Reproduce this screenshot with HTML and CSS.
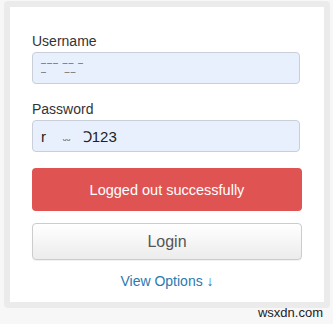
FILE: index.html
```html
<!DOCTYPE html>
<html>
<head>
<meta charset="utf-8">
<link rel="stylesheet" href="styles.css">
</head>
<body>
<div class="page">
  <div class="panel">
    <form class="form">
      <label class="label" for="user">Username</label>
      <div class="field user-field" id="user"><span class="blur">–––&nbsp;––&nbsp;–<br>–&nbsp;&nbsp;&nbsp;&nbsp;&nbsp;––</span></div>
      <label class="label pw-label" for="pw">Password</label>
      <div class="field pw-field" id="pw">r&nbsp;&nbsp;&nbsp;&nbsp;<span class="dots">ᵕᵕ</span>&nbsp;&nbsp;&nbsp;Ↄ123</div>
      <div class="alert">Logged out successfully</div>
      <button type="button" class="btn">Login</button>
      <a class="link" href="#">View Options ↓</a>
    </form>
  </div>
  <div class="watermark">wsxdn.com</div>
</div>
</body>
</html>
```
FILE: styles.css
```css
html, body {
  margin: 0;
  padding: 0;
  background: #f7f7f7;
}
.page {
  position: relative;
  width: 333px;
  height: 324px;
  padding: 1px 0 0 4px;
  box-sizing: border-box;
  font-family: "Liberation Sans", Arial, sans-serif;
}
.panel {
  width: 326px;
  height: 307px;
  box-sizing: border-box;
  border: 6px solid #ebebeb;
  border-radius: 4px;
  background: #fff;
}
.form {
  display: flex;
  flex-direction: column;
  align-items: flex-start;
  padding: 24px 16px 0 22px;
}
.label {
  font-size: 14px;
  line-height: 20px;
  color: #333;
  margin-bottom: 1px;
}
.pw-label {
  margin-top: 15px;
}
.field {
  width: 268px;
  height: 32px;
  box-sizing: border-box;
  background: #e8f0fe;
  border: 1px solid #c9cfd8;
  border-radius: 4px;
  padding: 0 8px;
  display: flex;
  align-items: center;
  color: #222;
}
.user-field .blur {
  font-size: 9px;
  line-height: 9px;
  letter-spacing: 1px;
  color: #555;
}
.pw-field {
  font-size: 15px;
}
.pw-field .dots {
  font-size: 10px;
  color: #444;
  padding-top: 6px;
}
.alert {
  margin-top: 16px;
  width: 270px;
  height: 43px;
  box-sizing: border-box;
  background: #df5353;
  border-radius: 4px;
  color: #fff;
  font-size: 14.5px;
  display: flex;
  align-items: center;
  justify-content: center;
}
.btn {
  margin-top: 12px;
  width: 270px;
  height: 37px;
  box-sizing: border-box;
  border: 1px solid #ccc;
  border-radius: 4px;
  background: linear-gradient(#ffffff, #ececec);
  box-shadow: 0 1px 1px rgba(0,0,0,0.06);
  font-family: "Liberation Sans", Arial, sans-serif;
  font-size: 16px;
  color: #555;
  padding: 0;
}
.link {
  align-self: stretch;
  width: 270px;
  margin-top: 11px;
  text-align: center;
  font-size: 14px;
  line-height: 20px;
  color: #2a7ab0;
  text-decoration: none;
}
.watermark {
  position: absolute;
  right: 10px;
  bottom: 3px;
  font-size: 13px;
  line-height: 16px;
  color: #222;
  font-family: "Liberation Sans", Arial, sans-serif;
}
```
